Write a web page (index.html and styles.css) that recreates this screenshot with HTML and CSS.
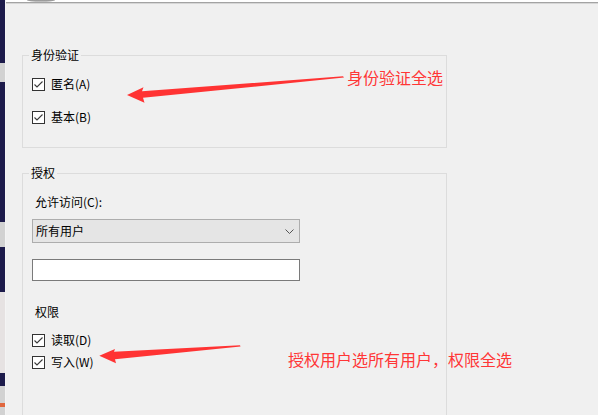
FILE: index.html
```html
<!DOCTYPE html>
<html lang="zh-CN">
<head>
  <meta charset="UTF-8">
  <title>身份验证和授权</title>
  <link rel="stylesheet" href="styles.css">
</head>
<body>
<div class="screen">
  <!-- background window edge -->
  <div class="taskbar">
    <span class="seg dark" style="height: 63px"></span>
    <span class="seg grey" style="height: 19px"></span>
    <span class="seg dark" style="height: 140px"></span>
    <span class="seg grey" style="height: 25px"></span>
    <span class="seg dark" style="height: 45px"></span>
    <span class="seg light" style="height: 81px"></span>
    <span class="seg dark" style="height: 13px"></span>
    <span class="seg grey" style="height: 17px"></span>
    <span class="seg orange" style="height: 4px"></span>
    <span class="seg grey" style="height: 8px"></span>
  </div>

  <div class="dialog">
    <div class="titlebar"><div class="knob"></div></div>

    <div class="content">
      <fieldset class="group">
        <legend>身份验证</legend>
        <div class="group-body auth">
          <label class="check"><span class="box"><svg viewBox="0 0 11 11"><path d="M1.5 5.5 L4 8 L9.5 2.5"/></svg></span>匿名(A)</label>
          <label class="check second"><span class="box"><svg viewBox="0 0 11 11"><path d="M1.5 5.5 L4 8 L9.5 2.5"/></svg></span>基本(B)</label>
        </div>
      </fieldset>

      <fieldset class="group grant">
        <legend>授权</legend>
        <div class="group-body">
          <div class="caption">允许访问(C):</div>
          <div class="combo">
            <span>所有用户</span>
            <svg class="chevron" viewBox="0 0 9 5"><path d="M0.5 0.5 L4.5 4.5 L8.5 0.5"/></svg>
          </div>
          <input class="field" type="text">
          <div class="caption perms">权限</div>
          <label class="check read"><span class="box"><svg viewBox="0 0 11 11"><path d="M1.5 5.5 L4 8 L9.5 2.5"/></svg></span>读取(D)</label>
          <label class="check write"><span class="box"><svg viewBox="0 0 11 11"><path d="M1.5 5.5 L4 8 L9.5 2.5"/></svg></span>写入(W)</label>
        </div>
      </fieldset>
    </div>
  </div>

  <!-- red annotations drawn over the screenshot -->
  <svg class="arrows" viewBox="0 0 598 415">
    <polygon points="127,95 143.5,87.3 142,91.3 343,76.2 344,77.6 143,97.8 144.5,102.8"/>
    <polygon points="99.3,355.7 115,349 114,351.8 240,345.2 240.5,346.6 115,359.3 116,363.3"/>
  </svg>
  <div class="note note-auth">身份验证全选</div>
  <div class="note note-grant">授权用户选所有用户，权限全选</div>
</div>
</body>
</html>
```

FILE: styles.css
```css
body {
    margin: 0;
    padding: 0;
    background-color: #f0f0f0;
    font-family: "Noto Sans CJK SC", sans-serif;
    font-size: 12px;
    line-height: 16px;
    color: #000;
}
.screen {
    position: relative;
    width: 598px;
    height: 415px;
    overflow: hidden;
    display: flex;
}
.taskbar {
    width: 5px;
    display: flex;
    flex-direction: column;
    border-right: 1px solid #f4f4f4;
    flex-shrink: 0;
}
.seg {
    display: block;
    flex-shrink: 0;
}
.seg.dark {
    background-color: #1d1b4b;
}
.seg.grey {
    background-color: #d2d2d2;
}
.seg.light {
    background-color: #e6e2e2;
}
.seg.orange {
    background-color: #e0673e;
}
.dialog {
    flex: 1;
    display: flex;
    flex-direction: column;
}
.titlebar {
    height: 8px;
    background-color: #fff;
    border-bottom: 1px solid #a3a3a3;
    box-shadow: 0 1px 0 #d6d6d6;
}
.knob {
    margin-left: 21px;
    width: 28px;
    height: 2px;
    border-radius: 0 0 14px 14px / 0 0 2px 2px;
    background: linear-gradient(to bottom, #8a8a8a, #d0d0d0);
}
.content {
    padding: 44px 0 0 16px;
}
.group {
    margin: 0;
    padding: 0;
    min-width: 0;
    width: 425px;
    box-sizing: border-box;
    border: 1px solid #dcdcdc;
}
.group legend {
    margin-left: 6px;
    padding: 0 2px;
    line-height: 16px;
}
.group-body {
    padding: 0 0 0 9px;
}
.group-body.auth {
    padding-top: 13px;
    padding-bottom: 22px;
}
.grant {
    margin-top: 17px;
    height: 300px;
}
.check {
    display: flex;
    align-items: center;
    height: 16px;
    gap: 6px;
}
.check.second {
    margin-top: 17px;
}
.box {
    width: 13px;
    height: 13px;
    box-sizing: border-box;
    border: 1px solid #333;
    background-color: #fff;
    display: flex;
    align-items: center;
    justify-content: center;
}
.box svg {
    width: 11px;
    height: 11px;
}
.box path {
    fill: none;
    stroke: #3a3a3a;
    stroke-width: 1.1;
}
.caption {
    padding-left: 3px;
    margin-top: 13px;
}
.combo {
    margin-top: 9px;
    width: 268px;
    height: 24px;
    box-sizing: border-box;
    border: 1px solid #adadad;
    background-color: #e5e5e5;
    display: flex;
    align-items: center;
    justify-content: space-between;
    padding: 0 5px 0 3px;
}
.chevron {
    width: 9px;
    height: 5px;
}
.chevron path {
    fill: none;
    stroke: #555;
    stroke-width: 1;
}
.field {
    display: block;
    margin: 16px 0 0 0;
    width: 268px;
    height: 22px;
    box-sizing: border-box;
    border: 1px solid #7a7a7a;
    background-color: #fff;
    padding: 0;
}
.caption.perms {
    margin-top: 23px;
}
.check.read {
    margin-top: 12px;
}
.check.write {
    margin-top: 6px;
}
.arrows {
    position: absolute;
    left: 0;
    top: 0;
    width: 598px;
    height: 415px;
}
.arrows polygon {
    fill: #ff3333;
}
.note {
    position: absolute;
    color: #ff3636;
    font-size: 16px;
    line-height: 16px;
    white-space: nowrap;
}
.note-auth {
    left: 347px;
    top: 69px;
}
.note-grant {
    left: 288px;
    top: 351px;
}
```
